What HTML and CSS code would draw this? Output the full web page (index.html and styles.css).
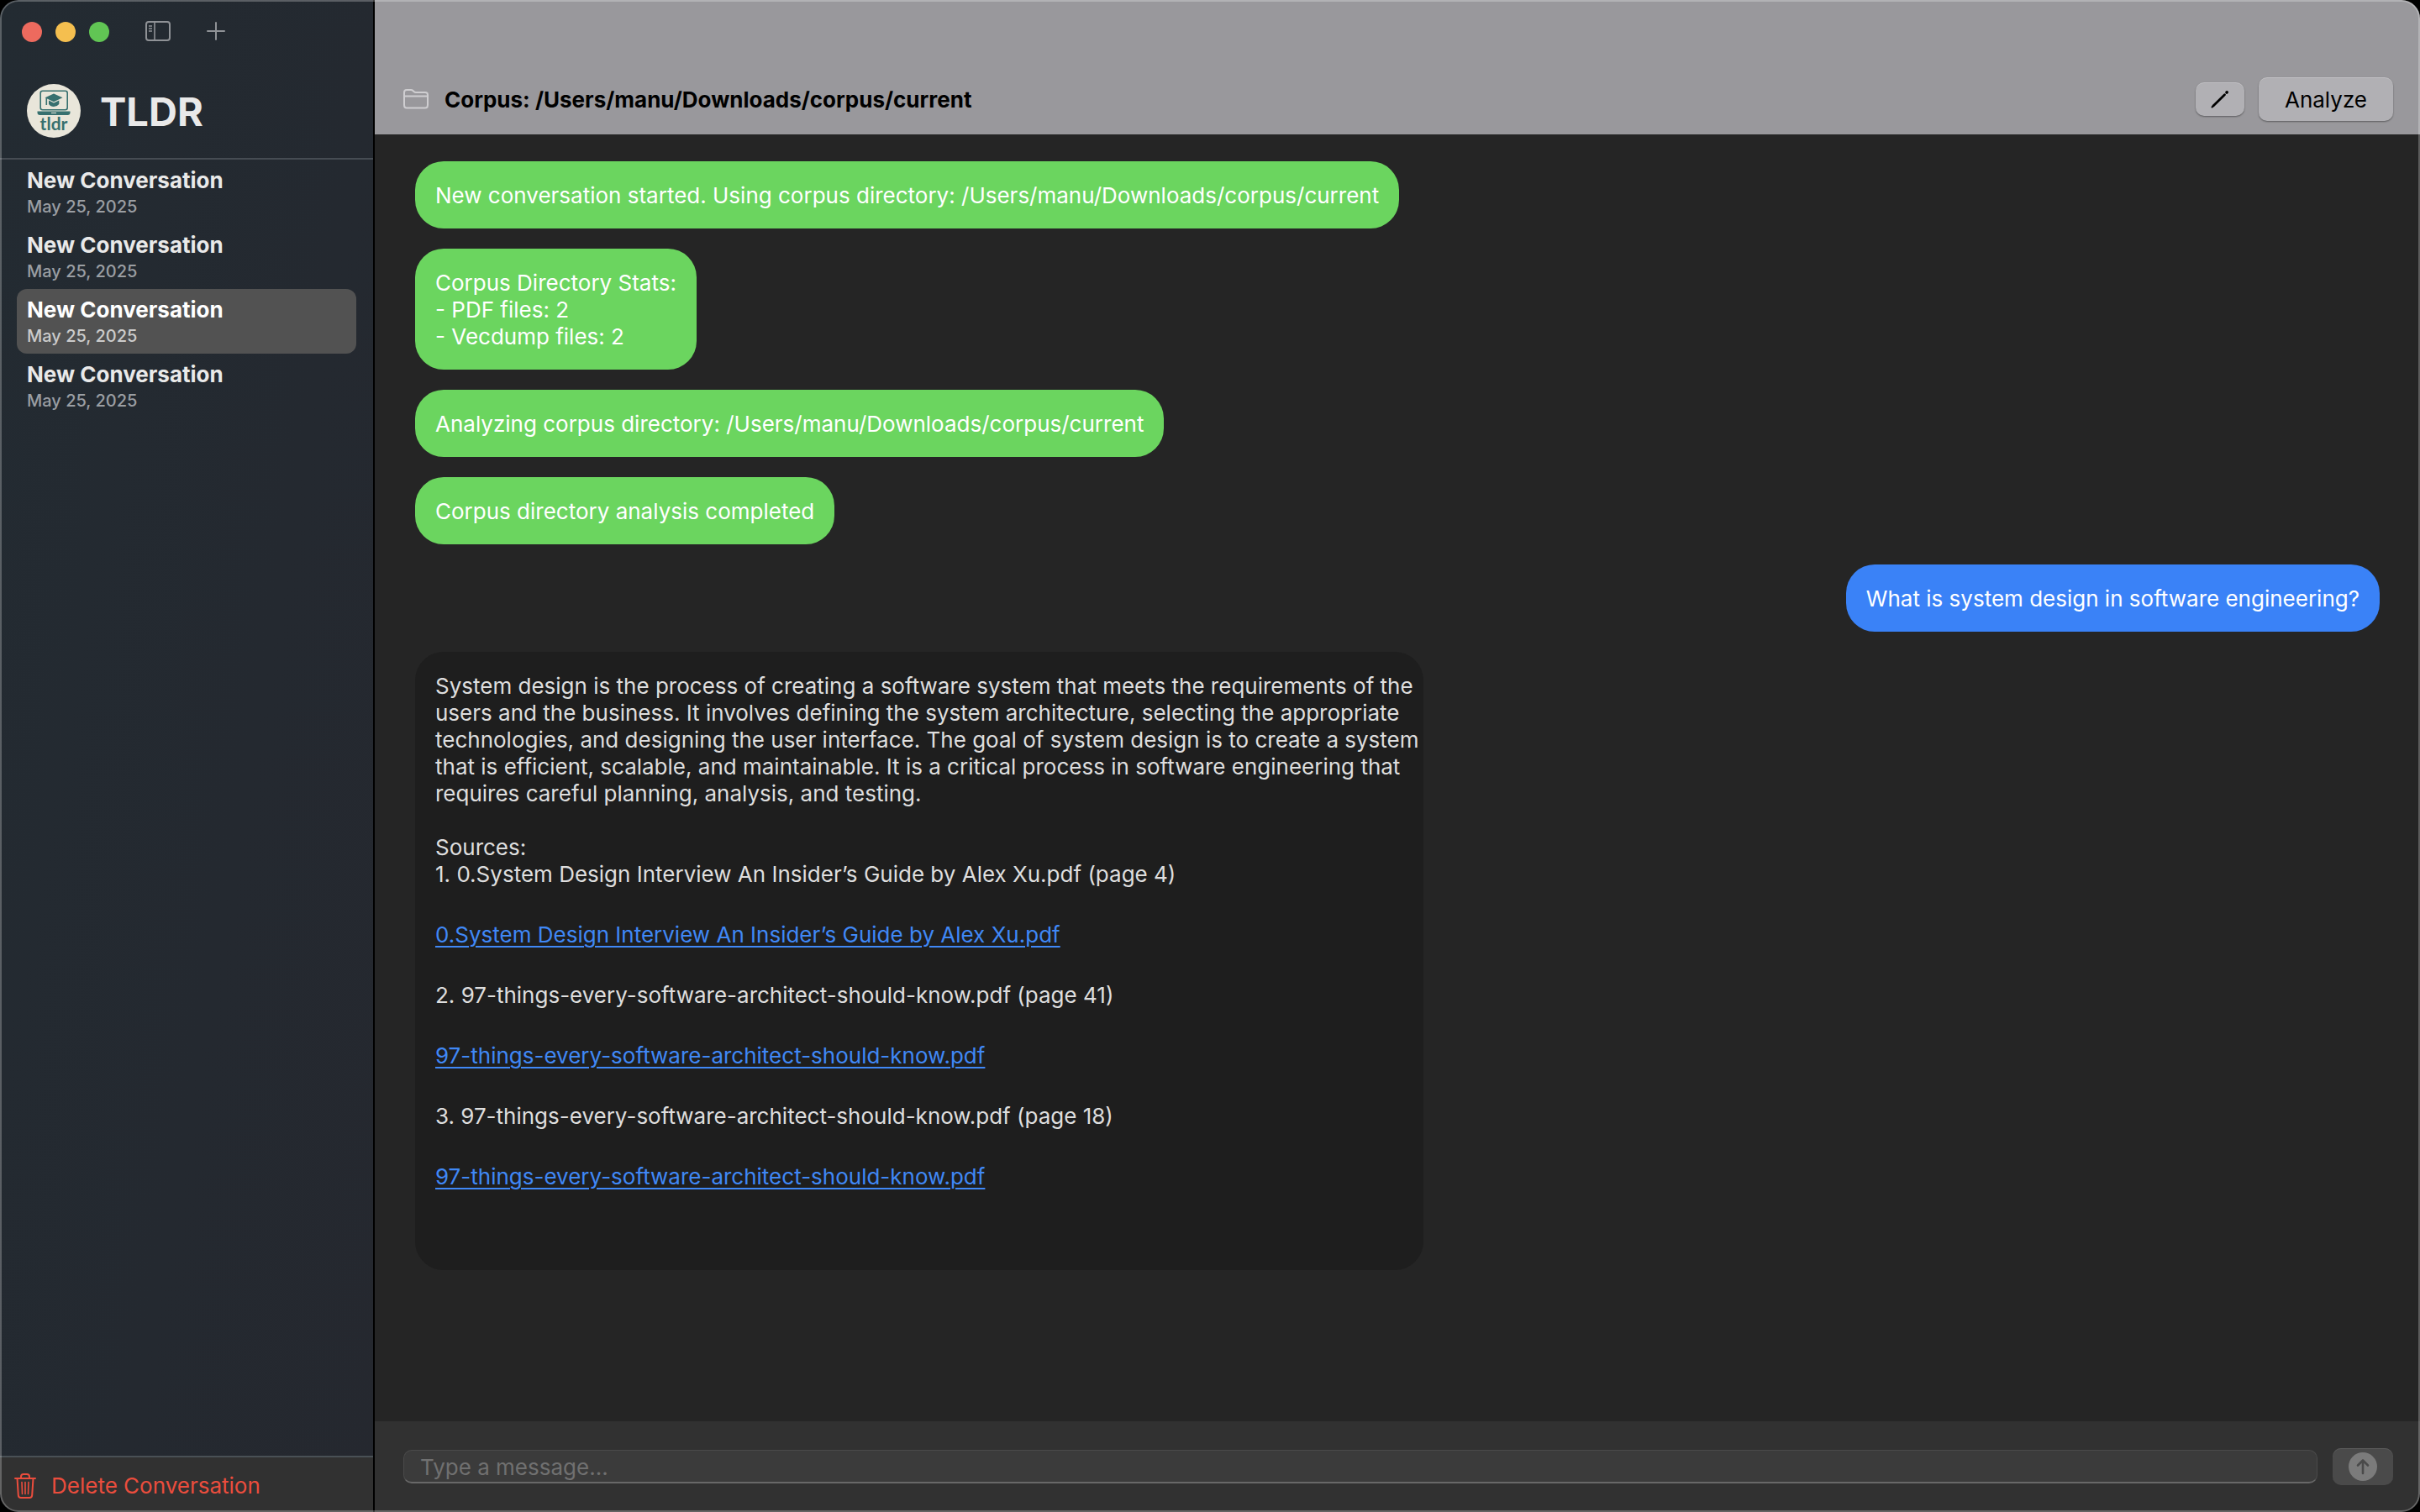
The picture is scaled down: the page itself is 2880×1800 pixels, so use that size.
FILE: index.html
```html
<!DOCTYPE html>
<html lang="en">
<head>
<meta charset="utf-8">
<title>TLDR</title>
<link rel="stylesheet" href="styles.css">
</head>
<body>
<div class="window">
  <aside class="sidebar">
    <div class="titlebar">
      <div class="lights">
        <button class="light light-close" type="button" aria-label="Close"></button>
        <button class="light light-min" type="button" aria-label="Minimize"></button>
        <button class="light light-zoom" type="button" aria-label="Zoom"></button>
      </div>
      <button class="tool" type="button" aria-label="Toggle sidebar">
        <svg width="30" height="24" viewBox="0 0 30 24" fill="none" stroke="currentColor" stroke-width="2">
          <rect x="1" y="1" width="28" height="22" rx="3"/>
          <path d="M11 1v22M4 6h4M4 9h4M4 12h4" stroke-width="1.6"/>
        </svg>
      </button>
      <button class="tool" type="button" aria-label="New conversation">
        <svg width="22" height="22" viewBox="0 0 22 22" fill="none" stroke="currentColor" stroke-width="2" stroke-linecap="round">
          <path d="M11 1v20M1 11h20"/>
        </svg>
      </button>
    </div>
    <div class="brand">
      <svg class="logo" width="64" height="64" viewBox="0 0 64 64" aria-hidden="true">
        <circle cx="32" cy="32" r="32" fill="#e9e6da"/>
        <rect x="16.2" y="8.2" width="32" height="22.500" rx="2.500" fill="none" stroke="#37706f" stroke-width="1.600"/>
        <path d="M12.500 32.500h39v1.500q0 3-3 3h-33q-3 0-3-3z" fill="#37706f"/>
        <path d="M29 34.500h6" stroke="#e9e6da" stroke-width="1.200"/>
        <path d="M32 11.500l10.500 4.800L32 21.300l-10.500-5z" fill="#37706f"/>
        <path d="M26 19.500l6 3 6.300-3v4.500q-2.500 3-6.300 3t-6-3z" fill="#37706f"/>
        <path d="M23.300 17v8" stroke="#37706f" stroke-width="1.600"/>
        <text class="logo-text" x="32" y="55" text-anchor="middle">tldr</text>
      </svg>
      <h1 class="brand-name">TLDR</h1>
    </div>
    <nav class="list" aria-label="Conversations">
      <a class="item" href="#c1"><span class="item-title">New Conversation</span><span class="item-date">May 25, 2025</span></a>
      <a class="item" href="#c2"><span class="item-title">New Conversation</span><span class="item-date">May 25, 2025</span></a>
      <a class="item item-selected" href="#c3" aria-current="page"><span class="item-title">New Conversation</span><span class="item-date">May 25, 2025</span></a>
      <a class="item" href="#c4"><span class="item-title">New Conversation</span><span class="item-date">May 25, 2025</span></a>
    </nav>
    <button class="delete" type="button">
      <svg width="26" height="30" viewBox="0 0 26 30" fill="none" stroke="currentColor" stroke-width="2" stroke-linecap="round">
        <path d="M1 6h24M8 6V4q0-3 3-3h4q3 0 3 3v2M3.500 6l1.300 20q.2 3 3 3h10.400q2.800 0 3-3L22.500 6"/>
        <path d="M9 10.500l.5 14M13 10.500v14M17 10.500l-.5 14" stroke-width="1.600"/>
      </svg>
      <span>Delete Conversation</span>
    </button>
  </aside>
  <main class="main">
    <header class="header">
      <svg class="folder" width="30" height="24" viewBox="0 0 30 24" fill="none" stroke="currentColor" stroke-width="2">
        <path d="M1 19V4q0-3 3-3h5q1.500 0 2.500 1l1 1q1 1 2.500 1h11q3 0 3 3v12q0 3.500-3 3.500H4q-3 0-3-3.500zM1 8.500h28"/>
      </svg>
      <h2 class="corpus">Corpus: /Users/manu/Downloads/corpus/current</h2>
      <button class="btn btn-edit" type="button" aria-label="Edit corpus">
        <svg width="22" height="22" viewBox="0 0 22 22" fill="none" stroke="currentColor" stroke-linecap="round">
          <path d="M3 19L16.500 5.800" stroke-width="2.800"/><path d="M1.500 20.500L4 18" stroke-width="2"/><path d="M19 3l.2-.2" stroke-width="3.600"/>
        </svg>
      </button>
      <button class="btn btn-analyze" type="button">Analyze</button>
    </header>
    <section class="chat" aria-label="Messages">
      <p class="bubble system">New conversation started. Using corpus directory: /Users/manu/Downloads/corpus/current</p>
      <p class="bubble system">Corpus Directory Stats:<br>- PDF files: 2<br>- Vecdump files: 2</p>
      <p class="bubble system">Analyzing corpus directory: /Users/manu/Downloads/corpus/current</p>
      <p class="bubble system">Corpus directory analysis completed</p>
      <p class="bubble user">What is system design in software engineering?</p>
      <article class="bubble answer">
        <p>System design is the process of creating a software system that meets the requirements of the<br>users and the business. It involves defining the system architecture, selecting the appropriate<br>technologies, and designing the user interface. The goal of system design is to create a system<br>that is efficient, scalable, and maintainable. It is a critical process in software engineering that<br>requires careful planning, analysis, and testing.</p>
        <p class="sources">Sources:<br>1. 0.System Design Interview An Insider’s Guide by Alex Xu.pdf (page 4)</p>
        <p class="source"><a href="#s1">0.System Design Interview An Insider’s Guide by Alex Xu.pdf</a></p>
        <p class="source">2. 97-things-every-software-architect-should-know.pdf (page 41)</p>
        <p class="source"><a href="#s2">97-things-every-software-architect-should-know.pdf</a></p>
        <p class="source">3. 97-things-every-software-architect-should-know.pdf (page 18)</p>
        <p class="source"><a href="#s3">97-things-every-software-architect-should-know.pdf</a></p>
      </article>
    </section>
    <form class="composer">
      <input class="field" type="text" placeholder="Type a message..." aria-label="Message">
      <button class="send" type="button" aria-label="Send">
        <svg width="34" height="34" viewBox="0 0 34 34" fill="none">
          <circle cx="17" cy="17" r="17" fill="#7b7b7b"/>
          <path d="M17 25V10M11 15.500l6-6 6 6" stroke="#4a4a4a" stroke-width="2.600" stroke-linecap="round" stroke-linejoin="round"/>
        </svg>
      </button>
    </form>
  </main>
</div>
</body>
</html>
```
FILE: styles.css
```css
* { box-sizing: border-box; }

body {
  margin: 0;
  background: #000;
  font: 400 26px/32px Inter, "Liberation Sans", sans-serif;
}

h1, h2, p { margin: 0; }

button, input { font: inherit; border: 0; padding: 0; }

svg { display: block; flex: none; }

.window {
  position: relative;
  display: grid;
  grid-template-columns: 446px minmax(0, 1fr);
  min-height: 100vh;
  border-radius: 22px;
  overflow: hidden;
}

/* Light hairline round the whole window */
.window::after {
  content: "";
  position: absolute;
  inset: 0;
  border: 2px solid rgba(255, 255, 255, .25);
  border-radius: 22px;
  pointer-events: none;
}

/* Sidebar */
.sidebar {
  display: flex;
  flex-direction: column;
  border-right: 2px solid #000;
  background: linear-gradient(100deg, #232b32 0%, #242930 60%, #25282f 100%);
  color: #e9e9e9;
}

.titlebar {
  display: flex;
  align-items: center;
  height: 76px;
  padding-left: 26px;
}

.lights { display: flex; gap: 16px; }

.light { width: 24px; height: 24px; border-radius: 50%; }
.light-close { background: #ed6a5e; }
.light-min { background: #f5bf4f; }
.light-zoom { background: #61c554; }

.tool { margin-left: 43px; padding-bottom: 2px; background: none; color: #8f9296; }

.brand {
  display: flex;
  align-items: center;
  gap: 23px;
  height: 114px;
  padding: 0 32px;
  border-bottom: 2px solid #464c53;
}

.logo-text { font: 700 21px Lato, sans-serif; fill: #37706f; }

.brand-name { padding-top: 2px; font-size: 47px; line-height: 56px; font-weight: 700; }

.list { flex: 1; padding: 0 20px; }

.item {
  display: block;
  height: 77px;
  padding: 9px 12px;
  border-radius: 12px;
  color: #e9e9e9;
  text-decoration: none;
}

.item-title { display: block; font-weight: 700; }
.item-date { display: block; font-size: 20px; line-height: 30px; font-weight: 500; color: #9a9ea3; }

.item-selected { background: #525252; color: #fff; }
.item-selected .item-date { color: #cbcbcb; }

.delete {
  display: flex;
  align-items: center;
  gap: 18px;
  height: 67px;
  padding: 2px 0 0 17px;
  border-top: 2px solid #495055;
  background: #313131;
  color: #eb4d3d;
}

/* Main column */
.main { display: flex; flex-direction: column; background: #252525; }

.header {
  display: flex;
  align-items: center;
  height: 160px;
  padding: 76px 32px 0 34px;
  background: #99989c;
  color: #000;
}

.folder { color: #cfced1; }

.corpus { flex: 1; padding: 2px 0 0 19px; font-size: 26px; line-height: 32px; font-weight: 700; }

.btn {
  display: flex;
  align-items: center;
  justify-content: center;
  border-radius: 10px;
  background: #b1b0b4;
  color: #000;
  box-shadow: 0 1px 2px rgba(0, 0, 0, .4), inset 0 1px 0 rgba(255, 255, 255, .2);
}

.btn-edit { width: 58px; height: 40px; margin-right: 17px; }
.btn-analyze { width: 160px; height: 52px; padding-top: 2px; }

.chat {
  flex: 1;
  display: flex;
  flex-direction: column;
  align-items: flex-start;
  gap: 24px;
  padding: 32px 48px;
}

.bubble { max-width: 1200px; padding: 25px 24px 23px; border-radius: 34px; color: #fff; }
.system { background: #6bd55f; }
.user { align-self: flex-end; background: #3a82f7; }
.answer { width: 1200px; padding: 25px 0 95px 24px; background: #1e1e1e; color: #dedede; }

.sources { margin-top: 32px; }
.source { margin-top: 40px; }
.source a { color: #4088f6; text-decoration-thickness: 2px; text-underline-offset: 4px; }

.composer {
  display: flex;
  align-items: center;
  gap: 18px;
  height: 108px;
  padding: 0 32px 0 34px;
  background: #313131;
}

.field {
  flex: 1;
  height: 40px;
  padding: 2px 20px 0 19px;
  border: 1px solid #4a4a4a;
  border-bottom: 2px solid #686868;
  border-radius: 10px;
  background: #3b3b3b;
  color: #dedede;
}

.field::placeholder { color: #707070; opacity: 1; }

.send {
  display: flex;
  align-items: center;
  justify-content: center;
  width: 72px;
  height: 44px;
  border-radius: 10px;
  background: #4a4a4a;
  box-shadow: inset 0 1px 0 #5a5a5a;
}
```
